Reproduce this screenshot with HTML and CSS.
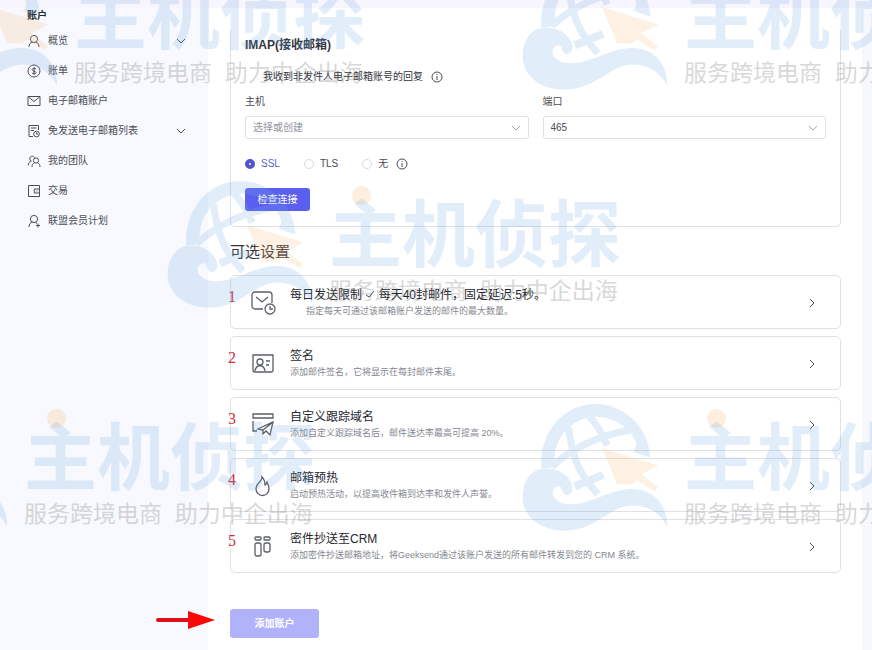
FILE: index.html
```html
<!DOCTYPE html>
<html lang="zh-CN">
  <head>
    <meta charset="UTF-8" />
    <title>电子邮箱账户</title>
    <link rel="stylesheet" href="styles.css">
  </head>
  <body>
    <svg class="defs" aria-hidden="true">
      <symbol id="globe" viewBox="21 18 437 380">
        <g fill="none" stroke="#6ea9e0" stroke-width="21">
          <path d="M160 88C172 180 192 228 248 288" />
          <path d="M110 206C170 150 250 112 350 95" />
          <path d="M216 50Q250 80 276 142" />
          <path d="M179 264L264 230" stroke-width="24" />
        </g>
        <path fill="#6ea9e0" d="M78 210C74 95 150 18 241 18C325 18 400 85 405 178L354 161C362 150 365 142 361 130C345 88 295 55 240 56C170 60 118 115 118 190L114 208Z" />
        <path fill="#6ea9e0" d="M153 291C172 290 176 270 168 254C150 215 105 208 80 212C45 220 23 250 23 297C23 355 75 397 150 397C245 395 280 325 350 322C400 322 435 345 455 384C457 325 420 272 350 272C280 272 225 322 160 318C120 314 108 290 114 275C122 260 138 262 140 272Q141 284 153 291Z" />
        <path fill="#fabc7c" d="M260 150L429 202L379 229L428 267L419 279L366 247L350 259L306 258Z" />
      </symbol>
      <symbol id="down" viewBox="0 0 10 10">
        <path d="M1 3l4 4 4-4" />
      </symbol>
      <symbol id="right" viewBox="0 0 10 10">
        <path d="M3 1l4 4-4 4" />
      </symbol>
      <symbol id="info" viewBox="0 0 12 12">
        <circle cx="6" cy="6" r="5" />
        <path d="M6 5v4M6 3v1" />
      </symbol>
    </svg>

    <div class="page">
      <nav class="sidebar">
        <h2>账户</h2>
        <a href="#">
          <svg class="icon" viewBox="0 0 14 14"><circle cx="7" cy="5" r="3.6" /><path d="M2 13c0-3 1.5-4.5 3.5-5M12 13c0-3-1.5-4.5-3.5-5" /></svg>
          <span>概览</span>
          <svg class="chevron"><use href="#down" /></svg>
        </a>
        <a href="#">
          <svg class="icon" viewBox="0 0 14 14"><circle cx="7" cy="7" r="6" /><path d="M9 5.2C8.5 3.9 5.2 4 5.2 5.6S9 7 9 8.6 5.500 10.200 5 8.800M7 3.300v7.400" /></svg>
          <span>账单</span>
        </a>
        <a href="#">
          <svg class="icon" viewBox="0 0 14 14"><path d="M1 2.500h12v9H1zM1.500 3L7 7.500 12.500 3" /></svg>
          <span>电子邮箱账户</span>
        </a>
        <a href="#">
          <svg class="icon" viewBox="0 0 14 14"><path d="M6 12.500H2v-11h9.500V6M4 4h5.500M4 6.500h3" /><circle cx="9.500" cy="10" r="2.800" /><path d="M9.500 8.500V10h1.500" /></svg>
          <span>免发送电子邮箱列表</span>
          <svg class="chevron"><use href="#down" /></svg>
        </a>
        <a href="#">
          <svg class="icon" viewBox="0 0 14 14"><circle cx="9" cy="6.500" r="2.600" /><path d="M5 13c0-2.500 1-3.500 2.500-4.200M13 13c0-2.500-1-3.500-2.500-4.200M7.500 3.600A2.500 2.500 0 1 0 4.300 7C2.500 7.500 1.300 9 1.200 11.500" /></svg>
          <span>我的团队</span>
        </a>
        <a href="#">
          <svg class="icon" viewBox="0 0 14 14"><path d="M1.500 1.500h11v11h-11zM12.500 5H7.300v4h5.200M9.500 7h1" /></svg>
          <span>交易</span>
        </a>
        <a href="#">
          <svg class="icon" viewBox="0 0 14 14"><circle cx="7" cy="5" r="3.600" /><path d="M2 13c0-3 1.500-4.500 3.500-5M8.500 8.500l1.500 1M11 9.500v4M9 11.500h4" /></svg>
          <span>联盟会员计划</span>
        </a>
      </nav>

      <main class="content">
        <form class="panel">
          <h3>IMAP(接收邮箱)</h3>
          <div class="reply">
            <input type="checkbox" id="replies" />
            <label for="replies">我收到非发件人电子邮箱账号的回复</label>
            <svg class="info"><use href="#info" /></svg>
          </div>
          <div class="fields">
            <div class="field">
              <label for="host">主机</label>
              <div class="select">
                <select id="host" class="empty"><option>选择或创建</option></select>
                <svg><use href="#down" /></svg>
              </div>
            </div>
            <div class="field">
              <label for="port">端口</label>
              <div class="select">
                <select id="port"><option>465</option></select>
                <svg><use href="#down" /></svg>
              </div>
            </div>
          </div>
          <div class="radios">
            <label><input type="radio" name="security" checked /><span>SSL</span></label>
            <label><input type="radio" name="security" /><span>TLS</span></label>
            <label><input type="radio" name="security" /><span>无</span></label>
            <svg class="info"><use href="#info" /></svg>
          </div>
          <button type="button" class="check">检查连接</button>
        </form>

        <h2 class="heading">可选设置</h2>
        <div class="cards">
          <button type="button" class="card">
            <b class="number">1</b>
            <svg class="card-icon" viewBox="0 0 26 26"><path d="M13 19H5a3 3 0 0 1-3-3V5a3 3 0 0 1 3-3h14a3 3 0 0 1 3 3v8M6 7l6 5 6-5" /><circle cx="20" cy="19" r="5" /><path d="M20 16v3h3" /></svg>
            <span class="text">
              <span class="title">每日发送限制 <svg class="tick" viewBox="0 0 10 10"><path d="M1 6l3 2 5-6" /></svg> 每天40封邮件，固定延迟:5秒。</span>
              <span class="desc indent">指定每天可通过该邮箱账户发送的邮件的最大数量。</span>
            </span>
            <svg class="arrow"><use href="#right" /></svg>
          </button>
          <button type="button" class="card">
            <b class="number">2</b>
            <svg class="card-icon" viewBox="0 0 26 26"><path d="M3 4h20v15a2 2 0 0 1-2 2H5a2 2 0 0 1-2-2z" /><circle cx="10" cy="11" r="3" /><path d="M5 20c1-7 9-7 10 0M16 10h4M16 14h3" /></svg>
            <span class="text">
              <span class="title">签名</span>
              <span class="desc">添加邮件签名，它将显示在每封邮件末尾。</span>
            </span>
            <svg class="arrow"><use href="#right" /></svg>
          </button>
          <button type="button" class="card">
            <b class="number">3</b>
            <svg class="card-icon" viewBox="0 0 26 26"><path d="M3 2h20v4H3zM3 9v10h4M8 17l15-7-3 13-4-4-3 3v-4zM13 18l10-8" /></svg>
            <span class="text">
              <span class="title">自定义跟踪域名</span>
              <span class="desc">添加自定义跟踪域名后，邮件送达率最高可提高 20%。</span>
            </span>
            <svg class="arrow"><use href="#right" /></svg>
          </button>
          <button type="button" class="card">
            <b class="number">4</b>
            <svg class="card-icon" viewBox="0 0 26 26"><path d="M12 4c1 4-6 6-6 12a6.500 6.500 0 0 0 13 0c0-3-1-5-2-7-1 2-1 3-2 3 0-4-1-6-3-8z" /></svg>
            <span class="text">
              <span class="title">邮箱预热</span>
              <span class="desc">启动预热活动，以提高收件箱到达率和发件人声誉。</span>
            </span>
            <svg class="arrow"><use href="#right" /></svg>
          </button>
          <button type="button" class="card">
            <b class="number">5</b>
            <svg class="card-icon" viewBox="0 0 26 26"><rect x="5" y="3" width="6" height="3" rx="1" /><rect x="14" y="3" width="6" height="3" rx="1" /><rect x="5" y="9" width="6" height="13" rx="2" /><rect x="14" y="9" width="6" height="9" rx="2" /></svg>
            <span class="text">
              <span class="title">密件抄送至CRM</span>
              <span class="desc">添加密件抄送邮箱地址，将Geeksend通过该账户发送的所有邮件转发到您的 CRM 系统。</span>
            </span>
            <svg class="arrow"><use href="#right" /></svg>
          </button>
        </div>

        <div class="actions">
          <svg class="pointer" viewBox="0 0 60 18"><path d="M3 9h33" stroke="#e0101a" stroke-width="4" stroke-linecap="round" /><path d="M33 0l27 9-27 9z" fill="#f80808" /></svg>
          <button type="button" class="add">添加账户</button>
        </div>
      </main>

      <div class="watermarks" aria-hidden="true">
        <div class="mark top-left">
          <svg><use href="#globe" /></svg>
          <div class="brand"><i></i><strong>主机侦探</strong><span>服务跨境电商  助力中企出海</span></div>
        </div>
        <div class="mark top-right">
          <svg><use href="#globe" /></svg>
          <div class="brand"><i></i><strong>主机侦探</strong><span>服务跨境电商  助力中企出海</span></div>
        </div>
        <div class="mark middle">
          <svg><use href="#globe" /></svg>
          <div class="brand"><i></i><strong>主机侦探</strong><span>服务跨境电商  助力中企出海</span></div>
        </div>
        <div class="mark bottom-left">
          <svg><use href="#globe" /></svg>
          <div class="brand"><i></i><strong>主机侦探</strong><span>服务跨境电商  助力中企出海</span></div>
        </div>
        <div class="mark bottom-right">
          <svg><use href="#globe" /></svg>
          <div class="brand"><i></i><strong>主机侦探</strong><span>服务跨境电商  助力中企出海</span></div>
        </div>
      </div>
    </div>
  </body>
</html>
```
FILE: styles.css
```css
* {
  box-sizing: border-box;
}
body {
  margin: 0;
  font-family: "Liberation Sans", "Noto Sans CJK SC", sans-serif;
  font-size: 10px;
  line-height: 16px;
  color: #4b4d55;
  background: #f7f8fd;
}
h2,
h3 {
  margin: 0;
}
button,
input,
select {
  font: inherit;
  margin: 0;
}
svg {
  fill: none;
  stroke: #4b4d55;
  flex: none;
}
.defs {
  position: absolute;
  width: 0;
  height: 0;
}
.page {
  position: relative;
  display: flex;
  min-height: 100vh;
  padding-right: 10px;
  border-top: 8px solid #f7f5fd;
}

/* sidebar */
.sidebar {
  width: 208px;
  flex: none;
  padding: 0 22px 0 27px;
  background: #f7f9fe;
}
.sidebar h2 {
  font-size: 10px;
  line-height: 16px;
  margin-bottom: 2px;
  color: #24262e;
}
.sidebar a {
  display: flex;
  align-items: center;
  gap: 7px;
  height: 30px;
  color: #4b4d55;
  text-decoration: none;
}
.icon {
  width: 14px;
  height: 14px;
}
.chevron {
  width: 10px;
  height: 10px;
  margin-left: auto;
}

/* account form */
.content {
  flex: 1;
  min-width: 0;
  padding: 22px 21px 12px 22px;
  background: #fff;
}
.panel {
  padding: 6px 14px 15px;
  border: 1px solid #dfe1e6;
  border-top: 0;
  border-radius: 0 0 5px 5px;
}
.panel h3 {
  font-size: 12px;
  line-height: 18px;
  color: #33353d;
}
.reply {
  display: flex;
  align-items: center;
  gap: 8px;
  height: 16px;
  margin: 15px 0 9px;
  color: #33353d;
}
.reply input {
  appearance: none;
  width: 10px;
  height: 10px;
}
.info {
  width: 12px;
  height: 12px;
}
.fields {
  display: flex;
  gap: 14px;
}
.field {
  flex: 1;
}
.field label {
  display: block;
  margin-bottom: 6px;
}
.select {
  position: relative;
}
.select select {
  display: block;
  appearance: none;
  width: 100%;
  height: 23px;
  padding: 0 7px;
  border: 1px solid #dfe1e6;
  border-radius: 3px;
  background: #fff;
  color: #4b4d55;
}
.select .empty {
  color: #92949c;
}
.select svg {
  position: absolute;
  right: 8px;
  top: 7px;
  width: 10px;
  height: 10px;
  stroke: #a8abb3;
}
.radios {
  display: flex;
  align-items: center;
  margin: 17px 0 16px;
}
.radios label {
  display: flex;
  align-items: center;
  gap: 6px;
  margin-right: 24px;
}
.radios label:last-of-type {
  margin-right: 8px;
}
.radios input {
  appearance: none;
  width: 10px;
  height: 10px;
  border: 1px solid #d9dbe0;
  border-radius: 50%;
}
.radios input:checked {
  border: 4px solid #4f54cf;
}
.radios input:checked + span {
  color: #5a5fcc;
}
.check,
.add {
  border: 0;
  border-radius: 3px;
  color: #fff;
}
.check {
  display: block;
  width: 65px;
  height: 23px;
  padding: 0;
  background: #5b5ff0;
}

/* optional settings */
.heading {
  margin: 14px 0 13px;
  font-size: 15px;
  font-weight: normal;
  line-height: 21px;
  color: #33353d;
}
.cards {
  display: grid;
  gap: 7px;
}
.card {
  position: relative;
  display: flex;
  align-items: center;
  width: 100%;
  min-height: 54px;
  padding: 11px 23px 9px 19px;
  border: 1px solid #dfe1e6;
  border-radius: 5px;
  background: #fff;
  text-align: left;
}
.number {
  position: absolute;
  left: -3px;
  top: 12px;
  font: 16px/18px "Liberation Serif", serif;
  color: #d2303a;
}
.card-icon {
  width: 26px;
  height: 26px;
  margin-right: 14px;
  stroke: #5c5f68;
  stroke-width: 1.3;
}
.text {
  flex: 1;
}
.title,
.desc {
  display: block;
}
.title {
  font-size: 12px;
  color: #24262e;
}
.tick {
  width: 10px;
  height: 10px;
}
.desc {
  font-size: 9px;
  color: #85878f;
}
.indent {
  padding-left: 16px;
}
.arrow {
  width: 10px;
  height: 10px;
}
.actions {
  position: relative;
  margin-top: 36px;
}
.add {
  display: block;
  width: 89px;
  height: 29px;
  background: #b1b2fb;
  font-weight: bold;
}
.pointer {
  position: absolute;
  left: -75px;
  top: 2px;
  width: 60px;
  height: 18px;
  stroke: none;
}

/* watermark layer */
.watermarks {
  position: absolute;
  inset: -8px 0 0;
  overflow: hidden;
  pointer-events: none;
}
.mark {
  position: absolute;
  display: flex;
  gap: 16px;
}
.mark svg {
  width: 146px;
  height: 127px;
  stroke: none;
  opacity: 0.2;
}
.brand {
  position: relative;
  padding-top: 18px;
  white-space: pre;
}
.brand i {
  position: absolute;
  left: 23px;
  top: 5px;
  width: 19px;
  height: 19px;
  border-radius: 50%;
  background: #fabc7c;
  opacity: 0.25;
}
.brand strong {
  display: block;
  font-size: 73px;
  line-height: 74px;
  color: #6ea9e0;
  opacity: 0.2;
}
.brand span {
  display: block;
  margin-top: 4px;
  font-size: 23px;
  line-height: 28px;
  color: #777;
  opacity: 0.28;
}
.top-left {
  left: -88px;
  top: -37px;
}
.top-right {
  left: 522px;
  top: -37px;
}
.middle {
  left: 167px;
  top: 181px;
}
.bottom-left {
  left: -138px;
  top: 404px;
}
.bottom-right {
  left: 522px;
  top: 404px;
}
```
